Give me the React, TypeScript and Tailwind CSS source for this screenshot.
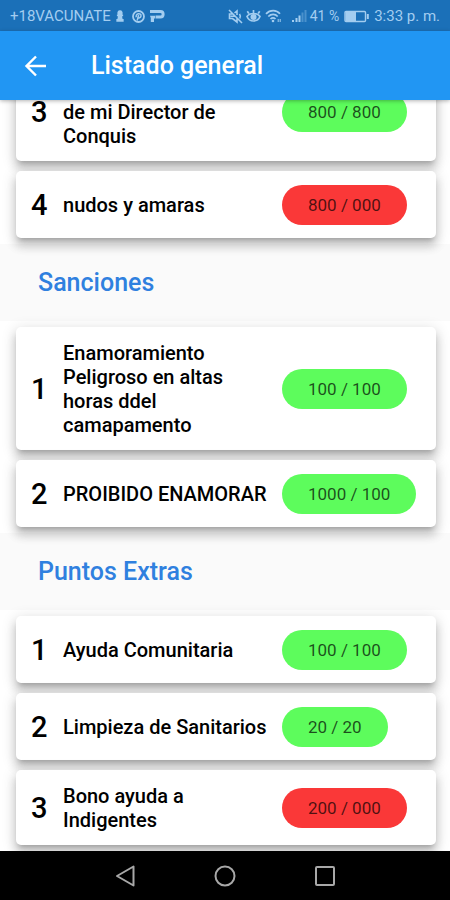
import React from "react";

type Item = {
  position: number;
  title: string;
  score: string;
  passed: boolean;
  titleClass?: string;
};

const requirements: Item[] = [
  { position: 3, title: "de mi Director de Conquis", score: "800 / 800", passed: true, titleClass: "pt-6" },
  { position: 4, title: "nudos y amaras", score: "800 / 000", passed: false },
];

const sanctions: Item[] = [
  { position: 1, title: "Enamoramiento Peligroso en altas horas ddel camapamento", score: "100 / 100", passed: true },
  { position: 2, title: "PROIBIDO ENAMORAR", score: "1000 / 100", passed: true },
];

const extras: Item[] = [
  { position: 1, title: "Ayuda Comunitaria", score: "100 / 100", passed: true },
  { position: 2, title: "Limpieza de Sanitarios", score: "20 / 20", passed: true },
  { position: 3, title: "Bono ayuda a Indigentes", score: "200 / 000", passed: false },
];

function StatusBar() {
  return (
    <div className="flex h-[31px] shrink-0 items-center justify-between bg-[#1b70b8] px-[10px] pt-px text-[14px] text-[#a3cdf0]">
      <div className="flex items-center gap-[5px]">
        <span className="text-[15px]">+18VACUNATE</span>
        <svg width="8" height="14" viewBox="0 0 9 14" fill="currentColor" aria-hidden="true">
          <path d="M4.500 0.500a3 3 0 0 1 2.500 4.700h1v2H6.800l.6 3.300h1.200v3H.4v-3H1.600l.6-3.300H1V5.200h1a3 3 0 0 1 2.500-4.700z" />
        </svg>
        <svg className="ml-[3px]" width="13" height="13" viewBox="0 0 13 13" fill="none" stroke="currentColor" aria-hidden="true">
          <circle cx="6.500" cy="6.500" r="5.500" strokeWidth="1.800" />
          <path d="M5.200 10.500 6.600 5M4.300 7.200C2.900 3.200 9.600 2.600 9 6c-.4 2.200-2.500 2.300-2.900 1.200" strokeWidth="1.500" />
        </svg>
        <svg width="15" height="14" viewBox="0 0 15 14" fill="none" stroke="currentColor" aria-hidden="true">
          <path d="M0 2.500h10.500c3.500 0 3.500 5.500 0 5.500H5.500" strokeWidth="3" />
          <path d="M0 6.800h5v2.700H4V13H.8V9z" fill="currentColor" stroke="none" />
        </svg>
      </div>
      <div className="flex items-center">
        <svg width="15" height="15" viewBox="0 0 15 15" fill="none" stroke="currentColor" strokeWidth="1.600" aria-hidden="true">
          <path d="M1 1l13 13M9 6V2L6.500 4M4.500 5H1.500v4.500h3L9 13V9.500M11.500 5c1 1.300 1 3 .3 4.500M2.500 7.200h4" />
        </svg>
        <svg className="ml-[3px]" width="15" height="14" viewBox="0 0 15 14" fill="none" stroke="currentColor" strokeWidth="1.700" aria-hidden="true">
          <path d="M1 7.500C3.500 3.500 11.500 3.500 14 7.500 11.500 13.500 3.500 13.500 1 7.500zM2.800 4.500 1.300 2.300M7.500 4V1M12.200 4.500l1.500-2.200" />
          <circle cx="7.500" cy="8" r="2.200" fill="currentColor" />
        </svg>
        <svg className="ml-[4px]" width="17" height="14" viewBox="0 0 17 14" fill="none" stroke="currentColor" strokeWidth="1.700" aria-hidden="true">
          <path d="M1 4.800c4-4.300 10.500-4.300 14 0M3.300 7.500c2.800-2.900 6.900-2.900 9.400 0M5.500 10c1.500-1.400 3.500-1.400 5 0" />
          <circle cx="8" cy="12" r="1.300" fill="currentColor" stroke="none" />
          <path d="M13.200 10v3M15.200 10v3" strokeWidth="1" />
        </svg>
        <svg className="ml-[10px]" width="15" height="14" viewBox="0 0 15 14" fill="currentColor" aria-hidden="true">
          <path d="M0 11h2v2H0zM3.500 9h2v4h-2zM6.500 6.500h2V13h-2z" />
          <path d="M9.500 3.500h2V13h-2zM12.500 1h2v12h-2z" opacity=".35" />
        </svg>
        <span className="ml-[3px]">41 %</span>
        <svg className="ml-[5px]" width="25" height="13" viewBox="0 0 25 13" fill="none" stroke="currentColor" aria-hidden="true">
          <rect x="1" y="1.500" width="20.500" height="10" rx="1" strokeWidth="1.400" />
          <path d="M2 2h9.500v9H2z" fill="currentColor" />
          <path d="M23.800 4v5" strokeWidth="2" />
        </svg>
        <span className="ml-[5px] text-[15px]">3:33 p. m.</span>
      </div>
    </div>
  );
}

function ItemCard({ item }: { item: Item }) {
  return (
    <li className="grid grid-cols-[32px_1fr_154px] items-center rounded-[5px] bg-white pt-[14px] pb-[13px] pl-[15px] shadow-[0_5px_5px_-3px_rgba(0,0,0,0.2),0_8px_10px_1px_rgba(0,0,0,0.14),0_3px_14px_2px_rgba(0,0,0,0.12)]">
      <span className="text-[29px] leading-[24px] font-medium">{item.position}</span>
      <span className={`pr-2 text-[20px] leading-[24px] font-medium ${item.titleClass ?? ""}`}>{item.title}</span>
      <span
        className={`flex h-[40px] items-center justify-self-start rounded-full px-[26px] pt-px text-[17px] whitespace-nowrap text-black/70 ${
          item.passed ? "bg-[#5dfc5c]" : "bg-[#fa3838]"
        }`}
      >
        {item.score}
      </span>
    </li>
  );
}

function ItemList({ items }: { items: Item[] }) {
  return (
    <ul className="flex flex-col gap-[10px] bg-white py-[6px] pr-[14px] pl-4">
      {items.map((item) => (
        <ItemCard key={item.position} item={item} />
      ))}
    </ul>
  );
}

function SectionTitle({ children }: { children: React.ReactNode }) {
  return (
    <h2 className="flex h-[77px] items-center px-[38px] pt-px text-[25px] font-medium text-[#2f80df]">{children}</h2>
  );
}

function NavigationBar() {
  return (
    <nav className="z-10 flex h-[49px] shrink-0 items-center justify-center gap-[76px] bg-black text-[#a8a8a8]">
      <button type="button" aria-label="Atrás">
        <svg width="24" height="24" viewBox="0 0 24 24" fill="none" stroke="currentColor" strokeWidth="2" strokeLinejoin="round">
          <path d="M20.500 2.500v19L4 12z" />
        </svg>
      </button>
      <button type="button" aria-label="Inicio">
        <svg width="24" height="24" viewBox="0 0 24 24" fill="none" stroke="currentColor" strokeWidth="2">
          <circle cx="12" cy="12" r="9.500" />
        </svg>
      </button>
      <button type="button" aria-label="Recientes">
        <svg width="24" height="24" viewBox="0 0 24 24" fill="none" stroke="currentColor" strokeWidth="2">
          <rect x="3" y="3" width="18" height="18" rx="1" />
        </svg>
      </button>
    </nav>
  );
}

export default function App() {
  return (
    <div className="flex h-screen flex-col overflow-hidden bg-[#fafafa] font-[Roboto,'Noto_Sans',sans-serif] text-black">
      <StatusBar />
      <header className="z-10 flex h-[69px] shrink-0 items-center bg-[#2196f3] pt-px pl-[22px] text-white shadow-[0_1px_4px_rgba(0,0,0,0.3)]">
        <button type="button" aria-label="Volver" className="w-[69px]">
          <svg width="28" height="28" viewBox="0 0 28 28" fill="none" stroke="currentColor" strokeWidth="2.400">
            <path d="M24 14H5M14 4.500 4.500 14l9.500 9.500" />
          </svg>
        </button>
        <h1 className="text-[25px] font-medium">Listado general</h1>
      </header>
      <main className="min-h-0 flex-1 overflow-hidden">
        <div className="-mt-[44px]">
          <ItemList items={requirements} />
          <SectionTitle>Sanciones</SectionTitle>
          <ItemList items={sanctions} />
          <SectionTitle>Puntos Extras</SectionTitle>
          <ItemList items={extras} />
        </div>
      </main>
      <NavigationBar />
    </div>
  );
}
